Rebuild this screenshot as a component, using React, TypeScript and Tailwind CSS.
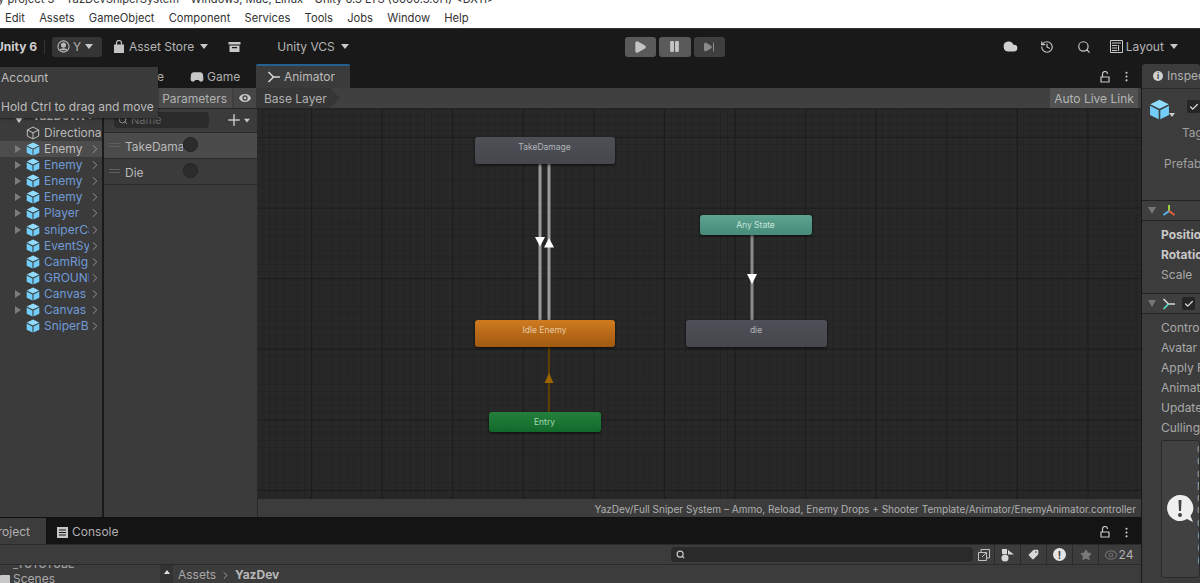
import React from "react";
import { Search, Plus, Cloud, History, Star, Tag, Eye, EllipsisVertical, ChevronRight, Check, Play, Pause, SkipForward, Gamepad2 } from "lucide-react";

const Cube = ({ s = 14, wire = false }: { s?: number; wire?: boolean }) =>
  wire ? (
    <svg width={s} height={s} viewBox="0 0 16 16" fill="none" stroke="#c4c4c4" strokeWidth="1.1">
      <path d="M8 1.2 14.5 4.5v7L8 14.8 1.5 11.5v-7zM1.5 4.500 8 7.800l6.500-3.300M8 7.800v7" />
    </svg>
  ) : (
    <svg width={s} height={s} viewBox="0 0 16 16">
      <path d="M8 .6 15 4 8 7.400 1 4z" fill="#8fdcff" />
      <path d="M.8 5.200 7.400 8.500v7L.8 12.200z" fill="#72cdf8" />
      <path d="M15.200 5.200 8.600 8.500v7l6.600-3.300z" fill="#72cdf8" />
    </svg>
  );

const Caret = ({ c = "" }: { c?: string }) => (
  <span className={"inline-block w-0 h-0 border-l-[4.5px] border-r-[4.5px] border-t-[5px] border-l-transparent border-r-transparent border-t-[#c8c8c8] " + c} />
);
const RightTri = () => (
  <span className="block w-0 h-0 border-t-[4px] border-b-[4px] border-l-[6px] border-t-transparent border-b-transparent border-l-[#7c7c7c]" />
);

const AnimIcon = ({ accent = false }: { accent?: boolean }) => (
  <svg width="14" height="14" viewBox="0 0 14 14" fill="none" stroke="#d6d6d6" strokeWidth="1.6">
    <path d="M1.500 2 6.500 7H13" />
    <path d="M1.500 12 6.500 7" stroke={accent ? "#5fe3cf" : "#d6d6d6"} />
  </svg>
);

const LockOpen = () => (
  <svg width="10" height="12" viewBox="0 0 10 12" fill="none" stroke="#c8c8c8" strokeWidth="1.2"><path d="M1 6h8v5H1zM2.500 6V3a2.500 2.500 0 0 1 5 0" /></svg>
);

const HRow = ({ name, arrow, active }: { name: string; arrow?: boolean; active?: boolean }) => (
  <div className={"h-[16.1px] flex items-center " + (active ? "bg-[#4d4d4d]" : "")}>
    <span className="w-[26px] flex justify-end pr-[5px] shrink-0">{arrow && <RightTri />}</span>
    <span className="w-[16px] shrink-0"><Cube s={14} /></span>
    <span className={"w-[45px] ml-[2px] shrink-0 overflow-hidden whitespace-nowrap text-[12px] leading-4 " + (active ? "text-[#bdbdbd]" : "text-[#6f9ad8]")}>{name}</span>
    <ChevronRight size={14} strokeWidth={1.6} className="text-[#9a9a9a] shrink-0 -ml-[1px]" />
  </div>
);

const hier: [string, boolean][] = [
  ["Enemy", true], ["Enemy", true], ["Enemy", true], ["Enemy", true], ["Player", true], ["sniperCam", true],
  ["EventSystem", false], ["CamRig", false], ["GROUND", false], ["Canvas", true], ["Canvas", true], ["SniperBullet", false],
];

const Param = ({ name, active }: { name: string; active?: boolean }) => (
  <div className={"h-[26px] border-b border-[#2a2a2a] flex items-center relative " + (active ? "bg-[#4b4b4b]" : "")}>
    <span className="w-[11px] ml-[5px] mr-[5px] border-y border-[#5f5f5f] h-[4px] shrink-0 -mt-[2px]" />
    <span className="w-[58px] overflow-hidden whitespace-nowrap text-[12px] leading-4 text-[#b8b8b8] mt-[2px]">{name}</span>
    <span className="w-[15px] h-[15px] rounded-full bg-[#2c2c2c] border border-[#222] -mt-[3px]" />
  </div>
);

const Node = ({ label, c, cls }: { label: string; c: string; cls: string }) => (
  <div className={"absolute rounded-[3px] shadow-[0_1px_3px_rgba(0,0,0,0.7)] flex justify-center pt-[4px] pr-[1px] text-[8.5px] leading-[13px] " + c + " " + cls}>{label}</div>
);

const Head = ({ children }: { children: React.ReactNode }) => (
  <div className="h-[21px] shrink-0 bg-[#3f3f3f] border-y border-[#222] flex items-center pl-[6px] gap-[6px]">
    <span className="w-0 h-0 border-l-[4.5px] border-r-[4.5px] border-t-[7px] border-l-transparent border-r-transparent border-t-[#777]" />
    {children}
  </div>
);
const ILabel = ({ t, b }: { t: string; b?: boolean }) => (
  <div className={"h-[20px] pl-[19px] whitespace-nowrap text-[12px] leading-[20px] " + (b ? "font-bold text-[#c8c8c8]" : "text-[#a8a8a8]")}>{t}</div>
);

const Cell = ({ children, w = "w-[26px]" }: { children: React.ReactNode; w?: string }) => (
  <div className={"h-[20px] border-l border-[#2a2a2a] flex items-center justify-center shrink-0 " + w}>{children}</div>
);

export default function App() {
  return (
    <div className="w-[1200px] h-[583px] overflow-hidden bg-[#191919] flex flex-col relative font-['Inter','Liberation_Sans',sans-serif]">
      {/* title */}
      <div className="h-[8px] shrink-0 bg-white overflow-hidden">
        <div className="-mt-[8px] text-[11.2px] leading-[15px] text-[#333] whitespace-nowrap -ml-[2px]">y project 3 - YazDevSniperSystem - Windows, Mac, Linux - Unity 6.3 LTS (6000.3.0f1) &lt;DX11&gt;</div>
      </div>
      {/* menu */}
      <div className="h-[20px] shrink-0 bg-white flex items-center pl-[5px] gap-[14.2px] text-[11.2px] text-[#333]">
        <span>Edit</span><span>Assets</span><span>GameObject</span><span>Component</span><span>Services</span><span>Tools</span><span>Jobs</span><span>Window</span><span>Help</span>
      </div>
      {/* toolbar */}
      <div className="h-[36px] shrink-0 bg-[#191919] flex items-center text-[#b4b4b4] text-[12px] relative border-t border-[#333]">
        <span className="font-bold text-[#d0d0d0] -ml-[5px] w-[49px] whitespace-nowrap">Unity 6</span>
        <span className="w-px h-[14px] bg-[#333]" />
        <div className="ml-[7px] w-[50px] h-[20px] rounded-[3px] bg-[#353535] flex items-center pl-[5px] gap-[3px]">
          <svg width="13" height="13" viewBox="0 0 14 14" fill="none" stroke="#b8b8b8" strokeWidth="1.2"><circle cx="7" cy="7" r="6" /><circle cx="7" cy="5.500" r="2.200" fill="#b8b8b8" /><path d="M3 11c1-2.200 7-2.200 8 0" fill="#b8b8b8" /></svg>
          <span>Y</span><Caret c="ml-[1px]" />
        </div>
        <svg className="ml-[11px]" width="12" height="14" viewBox="0 0 12 14" fill="#c4c4c4"><path d="M1 4.500h10V13H1z" /><path d="M3.500 5V3a2.500 2.500 0 0 1 5 0v2" fill="none" stroke="#c4c4c4" strokeWidth="1.2" /></svg>
        <span className="ml-[4px]">Asset Store</span><Caret c="ml-[6px]" />
        <svg className="ml-[20px]" width="13" height="12" viewBox="0 0 13 12" fill="#c8c8c8"><path d="M0.500 1h12v2.500H.5z" /><path d="M1.500 4.500h10V11h-10zM4 6v1.200h5V6z" fillRule="evenodd" /></svg>
        <span className="ml-[36px]">Unity VCS</span><Caret c="ml-[6px]" />
        <div className="ml-[276px] flex gap-[3px]">
          <div className="w-[31px] h-[20px] rounded-[3px] bg-[#5a5a5a] flex items-center justify-center"><Play size={14} fill="#c4c4c4" stroke="#c4c4c4" /></div>
          <div className="w-[32px] h-[20px] rounded-[3px] bg-[#5a5a5a] flex items-center justify-center"><Pause size={13} fill="#c4c4c4" stroke="#c4c4c4" /></div>
          <div className="w-[31px] h-[20px] rounded-[3px] bg-[#3f3f3f] flex items-center justify-center"><SkipForward size={12} fill="#8a8a8a" stroke="#8a8a8a" /></div>
        </div>
        <Cloud size={15} fill="#d0d0d0" stroke="#d0d0d0" className="ml-[278px]" />
        <History size={14} className="ml-[22px] text-[#c8c8c8]" />
        <Search size={14} className="ml-[23px] text-[#c8c8c8]" />
        <svg className="ml-[19px]" width="13" height="13" viewBox="0 0 13 13" fill="none" stroke="#c8c8c8"><path d="M.5.5h12v12H.5z" /><path d="M2 3h9M2 5.500h5M8.500 5v6M2 8h5M2 10.500h5" strokeWidth="1.2" /></svg>
        <span className="ml-[3px]">Layout</span><Caret c="ml-[6px]" />
      </div>
      {/* main */}
      <div className="flex-1 min-h-0 flex">
        <div className="w-[1141px] shrink-0 flex flex-col">
          {/* tabs */}
          <div className="h-[24px] shrink-0 flex text-[12px] text-[#b0b0b0]">
            <div className="w-[164px] shrink-0 flex items-center justify-end pt-[2px]">e</div>
            <div className="w-[92px] shrink-0 flex items-center pl-[26px] gap-[3px] pt-[2px]"><Gamepad2 size={14} fill="#c8c8c8" className="text-[#c8c8c8]" />Game</div>
            <div className="w-[94px] bg-[#3b3b3b] border-t-2 border-[#25608f] rounded-t-[2px] flex items-center pl-[11px] gap-[3px] text-[#bcbcbc]"><AnimIcon />Animator</div>
            <div className="flex-1 flex items-center justify-end pr-[8px] gap-[10px] pt-[1px]">
              <LockOpen />
              <EllipsisVertical size={13} className="text-[#c8c8c8]" />
            </div>
          </div>
          {/* param row */}
          <div className="h-[21px] shrink-0 flex bg-[#404040] border-b border-[#252525] text-[12px] text-[#b0b0b0]">
            <div className="w-[102px] shrink-0 bg-[#3c3c3c]" />
            <div className="w-[130px] shrink-0 bg-[#4b4b4b] flex items-center justify-end pr-[5px] mr-[2px] pt-[1px]">Parameters</div>
            <div className="w-[22px] shrink-0 bg-[#464646] flex items-center justify-center"><Eye size={16} fill="#c8c8c8" stroke="#464646" /></div>
            <div className="w-[84px] shrink-0 bg-[#363636] flex items-center pl-[8px] pt-[1px] [clip-path:polygon(0_0,88%_0,100%_50%,88%_100%,0_100%)]">Base Layer</div>
            <div className="flex-1" />
            <div className="w-[88px] bg-[#525252] flex items-center justify-center text-[#b4b4b4] pt-[1px]">Auto Live Link</div>
            <div className="w-[3px]" />
          </div>
          {/* panels */}
          <div className="h-[408px] shrink-0 flex bg-[#1a1a1a]">
            <div className="w-[102px] shrink-0 bg-[#3b3b3b] flex flex-col pt-[16px] overflow-hidden relative">
              <div className="absolute top-[0px] left-[32px] text-[12px] font-bold text-[#c0c0c0] leading-[14px] whitespace-nowrap">YazDevK :</div>
              <svg className="absolute top-[1px] left-[13px]" width="12" height="14" viewBox="0 0 12 14" fill="#d0d0d0"><path d="M6 1 11 6 6 13 1 6z" /></svg>
              <div className="h-[16px] flex items-center bg-[#3b3b3b]">
                <span className="w-[26px] shrink-0" />
                <span className="w-[16px] shrink-0"><Cube s={14} wire /></span>
                <span className="w-[58px] ml-[2px] overflow-hidden whitespace-nowrap text-[12px] text-[#b8b8b8]">Directional Light</span>
              </div>
              {hier.map(([n, a], i) => <HRow key={i} name={n} arrow={a} active={i === 0} />)}
            </div>
            <div className="w-[153px] ml-[2px] shrink-0 bg-[#3b3b3b] flex flex-col">
              <div className="h-[24px] shrink-0 border-b border-[#2a2a2a] flex items-center pb-[1px]">
                <div className="ml-[10px] w-[95px] h-[16px] rounded-[4px] bg-[#2b2b2b] flex items-center pl-[4px] gap-[3px] text-[11px] text-[#6a6a6a]"><Search size={10} className="text-[#999]" />Name</div>
                <Plus size={18} strokeWidth={2} className="ml-[16px] text-[#c4c4c4]" />
                <Caret c="ml-[0px] scale-75" />
              </div>
              <Param name="TakeDamage" active />
              <Param name="Die" />
            </div>
            <div className="w-[1px] bg-[#282828] shrink-0" />
            <div className="flex-1 flex flex-col">
              <div className="flex-1 relative bg-[#282828] bg-[linear-gradient(#1c1c1c_1px,transparent_1px),linear-gradient(90deg,#1c1c1c_1px,transparent_1px),linear-gradient(#232323_1px,transparent_1px),linear-gradient(90deg,#232323_1px,transparent_1px)] bg-[size:70.6px_70.6px,70.6px_70.6px,7.06px_7.06px,7.06px_7.06px] bg-[position:0_28px,53px_0,0_0,4px_0] overflow-hidden">
                <svg className="absolute inset-0" width="883" height="390" fill="none">
                  <path d="M282 55V212" stroke="#9a9a9a" strokeWidth="3" />
                  <path d="M291 55V212" stroke="#9a9a9a" strokeWidth="3" />
                  <path d="M277 128h10l-5 9.500z" fill="#fff" />
                  <path d="M286 138.500l5-9.500 5 9.500z" fill="#fff" />
                  <path d="M291 238V304" stroke="#5f3f00" strokeWidth="2" />
                  <path d="M286.500 274l4.500-10 4.500 10z" fill="#9c6500" />
                  <path d="M494 125V212" stroke="#8a8a8a" strokeWidth="3" />
                  <path d="M489 165h10l-5 10z" fill="#fff" />
                </svg>
                <Node label="TakeDamage" c="bg-[linear-gradient(#4e5057,#45474d)] text-[#b2b4b8]" cls="left-[217px] top-[28px] w-[140px] h-[27px]" />
                <Node label="Idle Enemy" c="bg-[linear-gradient(#cf7a20,#a05a10)] text-[#e8c8a0]" cls="left-[217px] top-[211px] w-[140px] h-[27px]" />
                <Node label="Entry" c="bg-[linear-gradient(#24803c,#116a2a)] text-[#a8d8b4]" cls="left-[231px] top-[303px] w-[112px] h-[20px]" />
                <Node label="Any State" c="bg-[linear-gradient(#5fa391,#458b78)] text-[#c8e4dc]" cls="left-[442px] top-[106px] w-[112px] h-[20px]" />
                <Node label="die" c="bg-[linear-gradient(#4e5057,#45474d)] text-[#b2b4b8]" cls="left-[428px] top-[211px] w-[141px] h-[27px]" />
              </div>
              <div className="h-[18px] shrink-0 bg-[#3c3c3c] flex items-center justify-end pr-[5px] pt-[4px] text-[10.04px] text-[#b0b0b0] whitespace-nowrap">YazDev/Full Sniper System – Ammo, Reload, Enemy Drops + Shooter Template/Animator/EnemyAnimator.controller</div>
            </div>
          </div>
          {/* bottom */}
          <div className="h-[27px] shrink-0 flex text-[12px] text-[#b0b0b0] border-t border-[#111] bg-[#141414]">
            <div className="w-[46px] bg-[#3c3c3c] flex items-center justify-end pr-[16px] pt-[2px] shrink-0">roject</div>
            <div className="ml-[11px] flex items-center gap-[4px] pt-[2px]">
              <svg width="11" height="11" viewBox="0 0 11 11" fill="#c8c8c8"><path d="M0 0h11v11H0zM2 2.500v1h7v-1zM2 5v1h7V5zM2 7.500v1h7v-1z" fillRule="evenodd" /></svg>
              <span>Console</span>
            </div>
            <div className="flex-1 flex items-center justify-end pr-[8px] gap-[10px] pt-[2px]">
              <LockOpen />
              <EllipsisVertical size={13} className="text-[#c8c8c8]" />
            </div>
          </div>
          <div className="h-[20px] shrink-0 bg-[#3c3c3c] border-t border-[#2a2a2a] flex items-center pl-[671px] text-[#b0b0b0]">
            <div className="w-[302px] h-[15px] rounded-[4px] bg-[#2a2a2a] flex items-center pl-[5px] shrink-0"><Search size={9} strokeWidth={3} className="text-[#ccc]" /></div>
            <div className="w-[21px] flex justify-center shrink-0">
              <svg width="14" height="14" viewBox="0 0 14 14" fill="none" stroke="#c0c0c0"><path d="M4 4V1.500h8.500V10H10M1.500 4.500H9.500V12.500H1.500zM5 9l4-4" /></svg>
            </div>
            <Cell><svg width="14" height="14" viewBox="0 0 14 14" fill="#d8d8d8"><circle cx="4" cy="10" r="3.500" /><path d="M1 1h5v5H1zM7 2l6 4.500H7z" /></svg></Cell>
            <Cell><Tag size={13} fill="#d8d8d8" stroke="#3c3c3c" className="rotate-90" /></Cell>
            <Cell><span className="w-[13px] h-[13px] rounded-full bg-[#e4e4e4] flex items-center justify-center text-[10px] font-bold text-[#3c3c3c] leading-none">!</span></Cell>
            <Cell><Star size={12} fill="#7a7a7a" stroke="#7a7a7a" /></Cell>
            <Cell w="w-[40px]"><Eye size={14} className="text-[#6a6a6a]" /><span className="text-[12px] ml-[1px]">24</span></Cell>
          </div>
          <div className="flex-1 min-h-0 flex bg-[#3c3c3c] border-t border-[#2a2a2a]">
            <div className="w-[160px] shrink-0 overflow-hidden relative text-[12px] text-[#aaa]">
              <div className="absolute -top-[4px] left-[13px] leading-[8px] text-[10.5px] font-semibold text-[#999]">_TUTOTUBE</div>
              <div className="absolute top-[6px] left-0 flex items-center gap-[3px] leading-[16px]">
                <span className="w-[10px] h-[9px] bg-[#c8c8c8] rounded-[1px]" />Scenes
              </div>
            </div>
            <div className="w-[13px] h-full bg-[#333] flex justify-center pt-[5px]"><span className="w-0 h-0 border-l-[3.5px] border-r-[3.5px] border-b-[4px] border-l-transparent border-r-transparent border-b-[#ddd]" /></div>
            <div className="flex items-center pl-[5px] pt-[1px] text-[12px] h-[19px] text-[#a8a8a8]">Assets<ChevronRight size={11} className="mx-[4px]" /><span className="font-bold text-[#b8b8b8]">YazDev</span></div>
          </div>
        </div>
        {/* inspector */}
        <div className="flex-1 ml-[1px] flex flex-col overflow-hidden">
          <div className="h-[24px] shrink-0 bg-[#3c3c3c] rounded-t-[3px] flex items-center pl-[11px] gap-[4px] text-[12px] text-[#b0b0b0] whitespace-nowrap overflow-hidden">
            <span className="w-[10px] h-[10px] rounded-full bg-[#d0d0d0] flex items-center justify-center text-[8px] font-bold text-[#3c3c3c] leading-none shrink-0">i</span>Inspector
          </div>
          <div className="h-[112px] shrink-0 bg-[#3c3c3c] border-t border-[#2a2a2a] relative text-[12px] text-[#a0a0a0] overflow-hidden">
            <div className="absolute left-[7px] top-[10px]"><Cube s={21} /></div>
            <div className="absolute left-[27px] top-[24px] w-0 h-0 border-l-[3.5px] border-r-[3.5px] border-t-[4px] border-l-transparent border-r-transparent border-t-[#ccc]" />
            <div className="absolute left-[45px] top-[11px] w-[13px] h-[13px] rounded-[2px] bg-[#252525] flex items-center justify-center"><Check size={10} strokeWidth={3} className="text-[#ddd]" /></div>
            <div className="absolute left-[40px] top-[35px]">Tag</div>
            <div className="absolute left-[22px] top-[66px]">Prefab</div>
          </div>
          <Head>
            <svg width="14" height="14" viewBox="0 0 14 14" fill="none" strokeWidth="2"><path d="M7 7V1" stroke="#9ccc3c" /><path d="M7 7 1.500 11" stroke="#5ab4ec" /><path d="M7 7l5.500 4" stroke="#e4633c" /></svg>
          </Head>
          <div className="h-[72px] shrink-0 bg-[#3c3c3c] pt-[4px]">
            <ILabel t="Position" b /><ILabel t="Rotation" b /><ILabel t="Scale" />
          </div>
          <Head>
            <AnimIcon accent />
            <span className="w-[13px] h-[13px] rounded-[2px] bg-[#252525] flex items-center justify-center"><Check size={10} strokeWidth={3} className="text-[#ddd]" /></span>
          </Head>
          <div className="flex-1 bg-[#3c3c3c] pt-[4px] overflow-hidden">
            <ILabel t="Controller" /><ILabel t="Avatar" /><ILabel t="Apply Root Motion" /><ILabel t="Animate Physics" /><ILabel t="Update Mode" /><ILabel t="Culling Mode" />
            <div className="mt-[2px] ml-[19px] h-[138px] border border-[#2a2a2a] rounded-[3px] bg-[#414141] relative overflow-hidden">
              <div className="absolute left-[35px] top-[2px] text-[10px] leading-[12.3px] text-[#aaa] whitespace-nowrap">
                {["Clip", "Curves", "Curves", "Muscle", "Clip", "Clip", "Clip", "(0", "(0", "(0"].map((t, i) => <div key={i}>{t}</div>)}
              </div>
              <div className="absolute left-[5px] top-[54px]">
                <svg width="27" height="29" viewBox="0 0 27 29"><path d="M13 0a13 13 0 1 0 7 24l6 3-2.500-6A13 13 0 0 0 13 0z" fill="#efefef" /><path d="M11.500 5h3l-.5 11h-2zM13 18a2 2 0 1 1 0 4 2 2 0 0 1 0-4z" fill="#414141" /></svg>
              </div>
            </div>
          </div>
        </div>
      </div>
      {/* tooltip */}
      <div className="absolute left-0 top-[67px] w-[158px] h-[51px] bg-[#3a3a3a] shadow-[0_1px_2px_rgba(0,0,0,0.5)] text-[12px] text-[#bcbcbc] leading-[16px] whitespace-nowrap pl-[1px]">
        <div className="pt-[3px]">Account</div>
        <div className="mt-[13px]">Hold Ctrl to drag and move</div>
      </div>
    </div>
  );
}
